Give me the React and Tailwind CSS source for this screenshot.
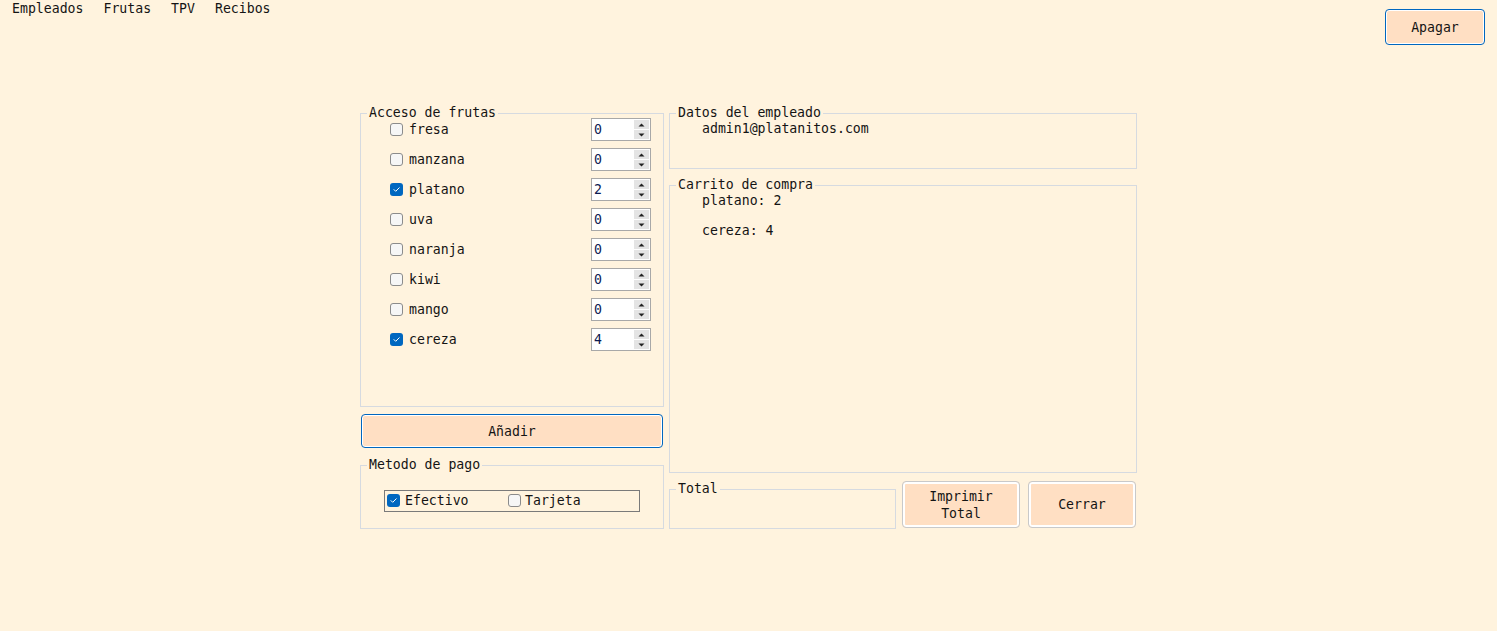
import React from 'react';

const frutas = [
  { name: 'fresa', qty: 0, on: false },
  { name: 'manzana', qty: 0, on: false },
  { name: 'platano', qty: 2, on: true },
  { name: 'uva', qty: 0, on: false },
  { name: 'naranja', qty: 0, on: false },
  { name: 'kiwi', qty: 0, on: false },
  { name: 'mango', qty: 0, on: false },
  { name: 'cereza', qty: 4, on: true },
];

const Check = ({ on }) =>
  on ? (
    <span className="w-[13px] h-[13px] rounded-[3px] bg-[#0067c0] flex items-center justify-center shrink-0">
      <svg width="9" height="9" viewBox="0 0 9 9" fill="none">
        <path d="M2 4.6 L3.7 6.3 L7.2 2.8" stroke="#fff" strokeWidth="1" strokeLinecap="round" strokeLinejoin="round" />
      </svg>
    </span>
  ) : (
    <span className="w-[13px] h-[13px] rounded-[3px] bg-[#f6f6f6] border border-[#8b8b8b] shrink-0" />
  );

const Spin = ({ value }) => (
  <div className="w-[60px] h-[23px] bg-white border border-[#a8a8a8] flex items-center justify-between">
    <span className="pl-[2px] text-[#0c1a50] font-medium">{value}</span>
    <div className="flex flex-col gap-px mr-px h-[19px]">
      <div className="w-[15px] flex-1 bg-[#e4e4e4] flex items-center justify-center">
        <svg width="7" height="4" viewBox="0 0 7 4"><path d="M0.5 3.5 L3.5 0.5 L6.5 3.5 Z" fill="#222" /></svg>
      </div>
      <div className="w-[15px] flex-1 bg-[#e4e4e4] flex items-center justify-center">
        <svg width="7" height="4" viewBox="0 0 7 4"><path d="M0.5 0.5 L3.5 3.5 L6.5 0.5 Z" fill="#222" /></svg>
      </div>
    </div>
  </div>
);

const Legend = ({ children }) => (
  <legend className="ml-[6px] px-[2px] leading-[16px]">{children}</legend>
);

export default function App() {
  return (
    <div
      className="min-h-screen bg-[#fff3de] text-[#141414] text-[13.2px]"
      style={{ fontFamily: '"DejaVu Sans Mono", "Liberation Mono", monospace' }}
    >
      <div className="flex justify-between items-start">
        <nav className="flex gap-[20px] pl-[12px] leading-[16px] pt-px">
          <span>Empleados</span>
          <span>Frutas</span>
          <span>TPV</span>
          <span>Recibos</span>
        </nav>
        <button className="mt-[9px] mr-[12px] w-[100px] h-[36px] pt-px rounded-[4px] border border-[#0067c0] bg-[#ffdfc3] shadow-[inset_0_0_0_1px_#fff]">
          Apagar
        </button>
      </div>

      <div className="flex justify-center gap-[5px] mt-[60px]">
        <div className="w-[304px] flex flex-col">
          <fieldset className="h-[302px] border border-[#d6dae0]">
            <Legend>Acceso de frutas</Legend>
            <div className="flex flex-col gap-[7px] -mt-[3px] pl-[29px] pr-[12px]">
              {frutas.map((f) => (
                <div key={f.name} className="h-[23px] flex items-center justify-between">
                  <div className="flex items-center gap-[6px]">
                    <Check on={f.on} />
                    <span>{f.name}</span>
                  </div>
                  <Spin value={f.qty} />
                </div>
              ))}
            </div>
          </fieldset>

          <button className="mt-[7px] ml-px w-[302px] h-[34px] pt-px rounded-[4px] border border-[#0067c0] bg-[#ffdfc3] shadow-[inset_0_0_0_1px_#fff]">
            Añadir
          </button>

          <fieldset className="mt-[9px] h-[72px] border border-[#d6dae0]">
            <Legend>Metodo de pago</Legend>
            <div className="mt-[17px] ml-[23px] w-[256px] h-[22px] border border-[#7a7a7a] flex items-center pl-[2px]">
              <div className="flex items-center gap-[5px] w-[121px]">
                <Check on />
                <span>Efectivo</span>
              </div>
              <div className="flex items-center gap-[4px]">
                <Check on={false} />
                <span>Tarjeta</span>
              </div>
            </div>
          </fieldset>
        </div>

        <div className="w-[468px] flex flex-col">
          <fieldset className="h-[64px] border border-[#d6dae0]">
            <Legend>Datos del empleado</Legend>
            <div className="pl-[32px] leading-[15px]">admin1@platanitos.com</div>
          </fieldset>

          <fieldset className="mt-[8px] h-[296px] border border-[#d6dae0]">
            <Legend>Carrito de compra</Legend>
            <div className="pl-[32px] leading-[15px]">
              <div>platano: 2</div>
              <div className="h-[15px]" />
              <div>cereza: 4</div>
            </div>
          </fieldset>

          <div className="mt-[8px] flex items-start">
            <fieldset className="w-[227px] h-[48px] border border-[#d6dae0]">
              <Legend>Total</Legend>
            </fieldset>
            <button className="ml-[6px] w-[118px] h-[47px] rounded-[4px] border border-[#c9c9c9] bg-[#ffdfc3] shadow-[inset_0_0_0_2px_#fff] leading-[17px]">
              Imprimir
              <br />
              Total
            </button>
            <button className="ml-[8px] w-[108px] h-[47px] rounded-[4px] border border-[#c9c9c9] bg-[#ffdfc3] shadow-[inset_0_0_0_2px_#fff]">
              Cerrar
            </button>
          </div>
        </div>
      </div>
    </div>
  );
}
